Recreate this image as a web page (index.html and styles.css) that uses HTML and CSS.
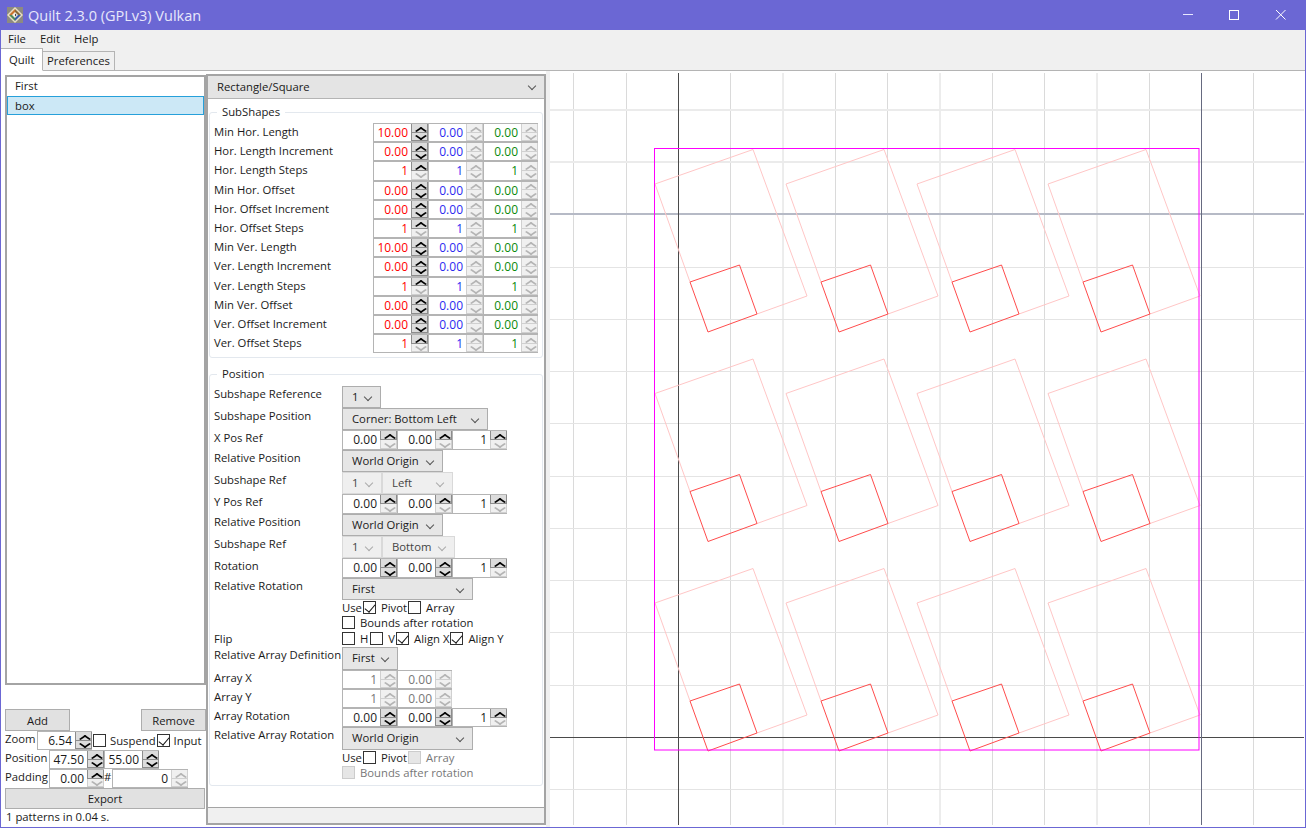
FILE: index.html
```html
<!DOCTYPE html>
<html lang="en">
<head>
    <meta charset="UTF-8">
    <title>Quilt 2.3.0 (GPLv3) Vulkan</title>
    <link rel="stylesheet" href="styles.css">
</head>
<body>
<div class="win">

<header class="titlebar">
    <svg class="appicon" viewBox="0 0 16 16" width="16" height="16">
        <rect width="16" height="16" fill="#8d8a80"/>
        <path d="M8 0L16 8L8 16L0 8Z" fill="#e9dfc4"/>
        <path d="M8 2L8 8L2 8Z" fill="#c9752f"/>
        <path d="M8 2L14 8L8 8Z" fill="#8a6a3a"/>
        <path d="M2 8L8 8L8 14Z" fill="#4f8a5b"/>
        <path d="M14 8L8 8L8 14Z" fill="#3a5fa8"/>
        <path d="M8 5L11 8L8 11L5 8Z" fill="#f6f2e6"/>
        <path d="M8 6.5L9.5 8L8 9.5Z" fill="#2b2b38"/>
    </svg>
    <span class="apptitle">Quilt 2.3.0 (GPLv3) Vulkan</span>
    <div class="winbtns">
        <svg width="46" height="30"><path d="M18 14.5H28" stroke="#e8e8ff"/></svg>
        <svg width="46" height="30"><rect x="18.5" y="10.5" width="9" height="9" fill="none" stroke="#fff"/></svg>
        <svg width="46" height="30"><path d="M19 10L28.500 19.500M28.500 10L19 19.500" stroke="#fff"/></svg>
    </div>
</header>

<nav class="menubar">
    <span>File</span>
    <span>Edit</span>
    <span>Help</span>
</nav>

<div class="tabs">
    <span class="tab active">Quilt</span>
    <span class="tab">Preferences</span>
</div>

<main class="page">

    <section class="left">
        <div class="list">
            <div class="item">First</div>
            <div class="item selected">box</div>
        </div>
        <div class="blank"></div>
        <div class="addrow">
            <button class="btn small">Add</button>
            <button class="btn small">Remove</button>
        </div>
        <div class="ctlrow">
            <span class="tag zoomtag">Zoom</span>
            <span class="spin"><span class="num">6.54</span><span class="arrows"><i class="up on"></i><i class="dn on"></i></span></span>
            <span class="chk side"></span><span class="chktext">Suspend</span>
            <span class="chk on side"></span><span class="chktext">Input</span>
        </div>
        <div class="ctlrow">
            <span class="tag">Position</span>
            <span class="spin"><span class="num">47.50</span><span class="arrows"><i class="up on"></i><i class="dn on"></i></span></span>
            <span class="spin"><span class="num">55.00</span><span class="arrows"><i class="up on"></i><i class="dn on"></i></span></span>
        </div>
        <div class="ctlrow">
            <span class="tag">Padding</span>
            <span class="spin"><span class="num">0.00</span><span class="arrows"><i class="up on"></i><i class="dn"></i></span></span>
            <span class="hash">#</span>
            <span class="spin wide"><span class="num">0</span><span class="arrows"><i class="up"></i><i class="dn"></i></span></span>
        </div>
        <button class="btn export">Export</button>
        <div class="status">1 patterns in 0.04 s.</div>
    </section>

    <section class="mid">
        <div class="shapesel">Rectangle/Square</div>

        <fieldset class="group subshapes">
            <legend>SubShapes</legend>

            <div class="srow"><span class="lbl wide">Min Hor. Length</span>
                <span class="spin"><span class="num r">10.00</span><span class="arrows"><i class="up on"></i><i class="dn on"></i></span></span>
                <span class="spin"><span class="num b">0.00</span><span class="arrows"><i class="up"></i><i class="dn"></i></span></span>
                <span class="spin"><span class="num g">0.00</span><span class="arrows"><i class="up"></i><i class="dn"></i></span></span>
            </div>
            <div class="srow"><span class="lbl wide">Hor. Length Increment</span>
                <span class="spin"><span class="num r">0.00</span><span class="arrows"><i class="up on"></i><i class="dn on"></i></span></span>
                <span class="spin"><span class="num b">0.00</span><span class="arrows"><i class="up"></i><i class="dn"></i></span></span>
                <span class="spin"><span class="num g">0.00</span><span class="arrows"><i class="up"></i><i class="dn"></i></span></span>
            </div>
            <div class="srow"><span class="lbl wide">Hor. Length Steps</span>
                <span class="spin"><span class="num r">1</span><span class="arrows"><i class="up on"></i><i class="dn"></i></span></span>
                <span class="spin"><span class="num b">1</span><span class="arrows"><i class="up"></i><i class="dn"></i></span></span>
                <span class="spin"><span class="num g">1</span><span class="arrows"><i class="up"></i><i class="dn"></i></span></span>
            </div>
            <div class="srow"><span class="lbl wide">Min Hor. Offset</span>
                <span class="spin"><span class="num r">0.00</span><span class="arrows"><i class="up on"></i><i class="dn on"></i></span></span>
                <span class="spin"><span class="num b">0.00</span><span class="arrows"><i class="up"></i><i class="dn"></i></span></span>
                <span class="spin"><span class="num g">0.00</span><span class="arrows"><i class="up"></i><i class="dn"></i></span></span>
            </div>
            <div class="srow"><span class="lbl wide">Hor. Offset Increment</span>
                <span class="spin"><span class="num r">0.00</span><span class="arrows"><i class="up on"></i><i class="dn on"></i></span></span>
                <span class="spin"><span class="num b">0.00</span><span class="arrows"><i class="up"></i><i class="dn"></i></span></span>
                <span class="spin"><span class="num g">0.00</span><span class="arrows"><i class="up"></i><i class="dn"></i></span></span>
            </div>
            <div class="srow"><span class="lbl wide">Hor. Offset Steps</span>
                <span class="spin"><span class="num r">1</span><span class="arrows"><i class="up on"></i><i class="dn"></i></span></span>
                <span class="spin"><span class="num b">1</span><span class="arrows"><i class="up"></i><i class="dn"></i></span></span>
                <span class="spin"><span class="num g">1</span><span class="arrows"><i class="up"></i><i class="dn"></i></span></span>
            </div>
            <div class="srow"><span class="lbl wide">Min Ver. Length</span>
                <span class="spin"><span class="num r">10.00</span><span class="arrows"><i class="up on"></i><i class="dn on"></i></span></span>
                <span class="spin"><span class="num b">0.00</span><span class="arrows"><i class="up"></i><i class="dn"></i></span></span>
                <span class="spin"><span class="num g">0.00</span><span class="arrows"><i class="up"></i><i class="dn"></i></span></span>
            </div>
            <div class="srow"><span class="lbl wide">Ver. Length Increment</span>
                <span class="spin"><span class="num r">0.00</span><span class="arrows"><i class="up on"></i><i class="dn on"></i></span></span>
                <span class="spin"><span class="num b">0.00</span><span class="arrows"><i class="up"></i><i class="dn"></i></span></span>
                <span class="spin"><span class="num g">0.00</span><span class="arrows"><i class="up"></i><i class="dn"></i></span></span>
            </div>
            <div class="srow"><span class="lbl wide">Ver. Length Steps</span>
                <span class="spin"><span class="num r">1</span><span class="arrows"><i class="up on"></i><i class="dn"></i></span></span>
                <span class="spin"><span class="num b">1</span><span class="arrows"><i class="up"></i><i class="dn"></i></span></span>
                <span class="spin"><span class="num g">1</span><span class="arrows"><i class="up"></i><i class="dn"></i></span></span>
            </div>
            <div class="srow"><span class="lbl wide">Min Ver. Offset</span>
                <span class="spin"><span class="num r">0.00</span><span class="arrows"><i class="up on"></i><i class="dn on"></i></span></span>
                <span class="spin"><span class="num b">0.00</span><span class="arrows"><i class="up"></i><i class="dn"></i></span></span>
                <span class="spin"><span class="num g">0.00</span><span class="arrows"><i class="up"></i><i class="dn"></i></span></span>
            </div>
            <div class="srow"><span class="lbl wide">Ver. Offset Increment</span>
                <span class="spin"><span class="num r">0.00</span><span class="arrows"><i class="up on"></i><i class="dn on"></i></span></span>
                <span class="spin"><span class="num b">0.00</span><span class="arrows"><i class="up"></i><i class="dn"></i></span></span>
                <span class="spin"><span class="num g">0.00</span><span class="arrows"><i class="up"></i><i class="dn"></i></span></span>
            </div>
            <div class="srow"><span class="lbl wide">Ver. Offset Steps</span>
                <span class="spin"><span class="num r">1</span><span class="arrows"><i class="up on"></i><i class="dn"></i></span></span>
                <span class="spin"><span class="num b">1</span><span class="arrows"><i class="up"></i><i class="dn"></i></span></span>
                <span class="spin"><span class="num g">1</span><span class="arrows"><i class="up"></i><i class="dn"></i></span></span>
            </div>
        </fieldset>

        <fieldset class="group position">
            <legend>Position</legend>

            <div class="prow h22"><span class="lbl">Subshape Reference</span><span class="sel w39">1</span></div>
            <div class="prow h22"><span class="lbl">Subshape Position</span><span class="sel w146">Corner: Bottom Left</span></div>
            <div class="prow h20"><span class="lbl">X Pos Ref</span>
                <span class="spin"><span class="num">0.00</span><span class="arrows"><i class="up on"></i><i class="dn"></i></span></span>
                <span class="spin"><span class="num">0.00</span><span class="arrows"><i class="up on"></i><i class="dn"></i></span></span>
                <span class="spin"><span class="num">1</span><span class="arrows"><i class="up on"></i><i class="dn"></i></span></span>
            </div>
            <div class="prow h22"><span class="lbl">Relative Position</span><span class="sel w101">World Origin</span></div>
            <div class="prow h22"><span class="lbl">Subshape Ref</span><span class="sel off w40">1</span><span class="sel off w70">Left</span></div>
            <div class="prow h20"><span class="lbl">Y Pos Ref</span>
                <span class="spin"><span class="num">0.00</span><span class="arrows"><i class="up on"></i><i class="dn"></i></span></span>
                <span class="spin"><span class="num">0.00</span><span class="arrows"><i class="up on"></i><i class="dn"></i></span></span>
                <span class="spin"><span class="num">1</span><span class="arrows"><i class="up on"></i><i class="dn"></i></span></span>
            </div>
            <div class="prow h22"><span class="lbl">Relative Position</span><span class="sel w101">World Origin</span></div>
            <div class="prow h22"><span class="lbl">Subshape Ref</span><span class="sel off w40">1</span><span class="sel off w72">Bottom</span></div>
            <div class="prow h20"><span class="lbl">Rotation</span>
                <span class="spin"><span class="num">0.00</span><span class="arrows"><i class="up on"></i><i class="dn on"></i></span></span>
                <span class="spin"><span class="num">0.00</span><span class="arrows"><i class="up on"></i><i class="dn on"></i></span></span>
                <span class="spin"><span class="num">1</span><span class="arrows"><i class="up on"></i><i class="dn"></i></span></span>
            </div>
            <div class="prow h22"><span class="lbl">Relative Rotation</span><span class="sel w131">First</span></div>

            <div class="prow h16"><span class="lbl"></span>
                <span class="chktext flush">Use</span><span class="chk on"></span>
                <span class="chktext">Pivot</span><span class="chk"></span>
                <span class="chktext">Array</span>
            </div>
            <div class="prow h15"><span class="lbl"></span>
                <span class="chk first"></span><span class="chktext">Bounds after rotation</span>
            </div>
            <div class="prow h16"><span class="lbl">Flip</span>
                <span class="chk first"></span><span class="chktext gap">H</span>
                <span class="chk"></span><span class="chktext">V</span>
                <span class="chk on"></span><span class="chktext">Align X</span>
                <span class="chk on"></span><span class="chktext">Align Y</span>
            </div>
            <div class="prow h23"><span class="lbl">Relative Array Definition</span><span class="sel w56">First</span></div>
            <div class="prow h19"><span class="lbl">Array X</span>
                <span class="spin off"><span class="num">1</span><span class="arrows"><i class="up"></i><i class="dn"></i></span></span>
                <span class="spin off"><span class="num">0.00</span><span class="arrows"><i class="up"></i><i class="dn"></i></span></span>
            </div>
            <div class="prow h19"><span class="lbl">Array Y</span>
                <span class="spin off"><span class="num">1</span><span class="arrows"><i class="up"></i><i class="dn"></i></span></span>
                <span class="spin off"><span class="num">0.00</span><span class="arrows"><i class="up"></i><i class="dn"></i></span></span>
            </div>
            <div class="prow h19"><span class="lbl">Array Rotation</span>
                <span class="spin"><span class="num">0.00</span><span class="arrows"><i class="up on"></i><i class="dn on"></i></span></span>
                <span class="spin"><span class="num">0.00</span><span class="arrows"><i class="up on"></i><i class="dn on"></i></span></span>
                <span class="spin"><span class="num">1</span><span class="arrows"><i class="up on"></i><i class="dn"></i></span></span>
            </div>
            <div class="prow h23"><span class="lbl">Relative Array Rotation</span><span class="sel w131">World Origin</span></div>
            <div class="prow h16"><span class="lbl"></span>
                <span class="chktext flush">Use</span><span class="chk"></span>
                <span class="chktext">Pivot</span><span class="chk off"></span>
                <span class="chktext dim">Array</span>
            </div>
            <div class="prow h15"><span class="lbl"></span>
                <span class="chk off first"></span><span class="chktext dim">Bounds after rotation</span>
            </div>
        </fieldset>

        <div class="spacer"></div>
        <div class="hscroll"></div>
    </section>

    <div class="splitter"></div>

    <svg class="view" viewBox="550 71 754 755" width="754" height="755">
        <defs>
            <g id="cell" fill="none">
                <path d="M690 282L655 184L753 149.5L807 296L757 314" stroke="#ffc6c6"/>
                <path d="M690 282L739.5 265L757 314L708 332Z" stroke="#ff4c4c"/>
            </g>
        </defs>
        <g fill="none">
            <path stroke="#dadada" d="M573.5 73V825M626.5 73V825M730.5 73V825M783 73V825M835.5 73V825M887.5 73V825M940 73V825M992.5 73V825M1044.5 73V825M1097 73V825M1149.5 73V825M1253.5 73V825"/>
            <path stroke="#ebebeb" stroke-width="2" d="M550 110H1304M550 162H1304"/>
            <path stroke="#e4e4e4" d="M550 267.5H1304M550 319.5H1304M550 371.5H1304M550 423.5H1304M550 476.5H1304M550 528.5H1304M550 580.5H1304M550 632.5H1304M550 685.5H1304M550 789.5H1304"/>
            <path stroke="#b6bac6" stroke-width="2" d="M550 214H1304"/>
            <path stroke="#4a4a4a" d="M678.5 73V825M550 737.5H1304"/>
            <path stroke="#666a80" d="M1201.5 73V825"/>
        </g>
        <use href="#cell"/>
        <use href="#cell" x="131"/>
        <use href="#cell" x="262"/>
        <use href="#cell" x="393"/>
        <use href="#cell" y="209.5"/>
        <use href="#cell" x="131" y="209.5"/>
        <use href="#cell" x="262" y="209.5"/>
        <use href="#cell" x="393" y="209.5"/>
        <use href="#cell" y="419"/>
        <use href="#cell" x="131" y="419"/>
        <use href="#cell" x="262" y="419"/>
        <use href="#cell" x="393" y="419"/>
        <rect x="654.5" y="148.5" width="544.5" height="601.5" fill="none" stroke="#ff00ff"/>
    </svg>
</main>
</div>
</body>
</html>
```

FILE: styles.css
```css
* {
    box-sizing: border-box;
}
body {
    margin: 0;
    background: #fff;
    color: #1a1a1a;
    font-family: "Open Sans", "Liberation Sans", sans-serif;
    font-size: 11.3px;
    overflow: hidden;
}
.win {
    width: 1306px;
    height: 828px;
    display: flex;
    flex-direction: column;
    border: 1px solid #6b67d4;
    border-top: 0;
    background: #f0f0f0;
}

/* title bar */
.titlebar {
    height: 30px;
    flex: none;
    display: flex;
    align-items: center;
    background: #6b67d4;
    color: #e8e8fb;
    padding-left: 6px;
}
.appicon {
    margin-right: 5px;
}
.apptitle {
    font-size: 14.5px;
}
.winbtns {
    margin-left: auto;
    display: flex;
    margin-right: 2px;
    height: 30px;
}

/* menu and tabs */
.menubar {
    height: 18px;
    flex: none;
    display: flex;
    gap: 14px;
    padding-left: 7px;
    align-items: center;
    line-height: 20px;
}
.tabs {
    height: 23px;
    flex: none;
    display: flex;
    align-items: flex-end;
    border-bottom: 1px solid #b4b4b4;
    position: relative;
}
.tab {
    height: 20px;
    padding: 0 4px;
    margin-bottom: -1px;
    border: 1px solid #b4b4b4;
    border-left: 0;
    line-height: 17px;
}
.tab.active {
    height: 23px;
    width: 42px;
    padding-left: 8px;
    background: #fff;
    border-left: 0;
    border-bottom-color: #fff;
    line-height: 22px;
}

/* tab page */
.page {
    flex: 1;
    display: flex;
    background: #fff;
    min-height: 0;
}
.left {
    width: 205px;
    flex: none;
    padding: 4px 0 2px 4px;
    display: flex;
    flex-direction: column;
}
.list {
    height: 610px;
    flex: none;
    border: 2px solid #a4a4a4;
    padding-top: 1px;
}
.item {
    height: 18px;
    line-height: 16px;
    padding-left: 8px;
}
.item.selected {
    height: 19px;
    line-height: 18px;
    background: #cce8f6;
    border: 1px solid #26a0da;
    padding-left: 7px;
}
.blank {
    height: 24px;
    flex: none;
}
.addrow {
    display: flex;
    justify-content: space-between;
    height: 22px;
    flex: none;
}
.btn {
    font: inherit;
    color: inherit;
    background: #e1e1e1;
    border: 1px solid #adadad;
    padding: 0;
}
.btn.small {
    width: 65px;
}
.ctlrow {
    height: 19px;
    flex: none;
    display: flex;
    align-items: center;
    position: relative;
}
.ctlrow .chktext {
    margin-left: 4px;
}
.tag {
    width: 44px;
    flex: none;
    line-height: 15px;
    margin-bottom: 4px;
}
.zoomtag {
    width: 32px;
}
.hash {
    width: 8px;
    flex: none;
    margin-bottom: 4px;
}
.btn.export {
    height: 21px;
    flex: none;
    width: 200px;
    margin-top: 0;
}
.status {
    height: 16px;
    flex: none;
    line-height: 16px;
    padding-left: 1px;
}

/* middle panel */
.mid {
    width: 340px;
    flex: none;
    margin-top: 3px;
    margin-bottom: 2px;
    border: 2px solid #a4a4a4;
    display: flex;
    flex-direction: column;
}
.shapesel {
    height: 23px;
    flex: none;
    background: #e4e4e4;
    border-bottom: 1px solid #b4b4b4;
    padding-left: 9px;
    line-height: 22px;
    position: relative;
}
.shapesel::after,
.sel::after {
    content: "";
    position: absolute;
    right: 9px;
    top: 7px;
    width: 5px;
    height: 5px;
    border-right: 1px solid #555;
    border-bottom: 1px solid #555;
    transform: rotate(45deg);
}
.group {
    margin: 0 1px;
    padding: 0 0 0 4px;
    border: 1px solid #e3e8ee;
    border-radius: 3px;
    min-width: 0;
}
.group legend {
    margin-left: 3px;
    padding: 0 5px;
    line-height: 16px;
}
.subshapes {
    margin-top: 5px;
    height: 254px;
    padding-top: 3px;
}
.position {
    margin-top: 8px;
    height: 420px;
    padding-top: 4px;
}
.srow {
    height: 19.2px;
    display: flex;
}
.lbl {
    width: 128px;
    flex: none;
    white-space: nowrap;
    line-height: 15px;
}
.lbl.wide {
    width: 159px;
    line-height: 17px;
}
.prow {
    display: flex;
    align-items: center;
}
.prow .lbl {
    align-self: flex-start;
}
.h15 { height: 15px; padding-bottom: 2px; }
.h16 { height: 16px; padding-bottom: 2px; }
.h19 { height: 19px; }
.h20 { height: 20px; }
.h22 { height: 22px; }
.h23 { height: 23px; }

/* number box with its up and down buttons */
.spin {
    width: 55px;
    flex: none;
    height: 100%;
    display: flex;
    background: #fff;
    border: 1px solid #b4b4b4;
    border-right: 0;
}
.ctlrow .spin {
    height: 19px;
}
.spin.wide {
    width: 76px;
}
.num {
    flex: 1;
    text-align: right;
    padding-right: 3px;
    line-height: 17px;
    font-size: 12px;
}
.num.r { color: #f00; }
.num.b { color: #2a2af0; }
.num.g { color: #0a8a0a; }
.spin.off .num {
    color: #777;
}
.arrows {
    width: 17px;
    flex: none;
    display: flex;
    flex-direction: column;
}
.arrows i {
    flex: 1;
    position: relative;
    background: #f0f0f0;
    border: 1px solid #d0d0d0;
    border-top-width: 0;
}
.arrows i.on {
    background: #dcdcdc;
    border-color: #8c8c8c;
}
.arrows i::before {
    content: "";
    position: absolute;
    left: 4.5px;
    width: 6px;
    height: 6px;
    border-left: 2px solid #b4b4b4;
    border-top: 2px solid #b4b4b4;
}
.arrows i.on::before {
    border-color: #000;
}
.arrows .up::before {
    top: 2.5px;
    transform: scale(1.05, .72) rotate(45deg);
}
.arrows .dn::before {
    top: -.5px;
    transform: scale(1.05, .72) rotate(225deg);
}

/* dropdowns */
.sel {
    height: 100%;
    flex: none;
    position: relative;
    background: #e6e6e6;
    border: 1px solid #adadad;
    padding-left: 9px;
    line-height: 20px;
}
.sel.off {
    background: #efefef;
    border-color: #d9d9d9;
    color: #444;
}
.sel.off::after {
    border-color: #aaa;
}
.w39 { width: 39px; }
.w40 { width: 40px; }
.w56 { width: 56px; }
.w70 { width: 71px; }
.w72 { width: 73px; }
.w101 { width: 101px; }
.w131 { width: 131px; }
.w146 { width: 146px; }

/* checkboxes */
.chk {
    width: 13px;
    height: 13px;
    flex: none;
    margin-left: 1px;
    background: #fff;
    border: 1px solid #333;
    position: relative;
}
.chk.first {
    margin-left: 0;
}
.chk.on::after {
    content: "";
    position: absolute;
    left: 3px;
    top: 0;
    width: 5px;
    height: 9px;
    border-right: 1.5px solid #111;
    border-bottom: 1.5px solid #111;
    transform: rotate(40deg);
}
.chk.off {
    background: #e6e6e6;
    border-color: #ccc;
}
.chktext {
    margin-left: 5px;
    white-space: nowrap;
}
.chktext.flush {
    margin-left: 0;
}
.chktext.gap {
    margin-right: 1px;
}
.chktext.dim {
    color: #777;
}

.spacer {
    flex: 1;
}
.hscroll {
    height: 16px;
    flex: none;
    background: #f0f0f0;
    border-top: 1px solid #a4a4a4;
}

/* viewport */
.splitter {
    width: 4px;
    flex: none;
    background: #f0f0f0;
}
.view {
    flex: none;
    display: block;
    background: #fff;
}
```
